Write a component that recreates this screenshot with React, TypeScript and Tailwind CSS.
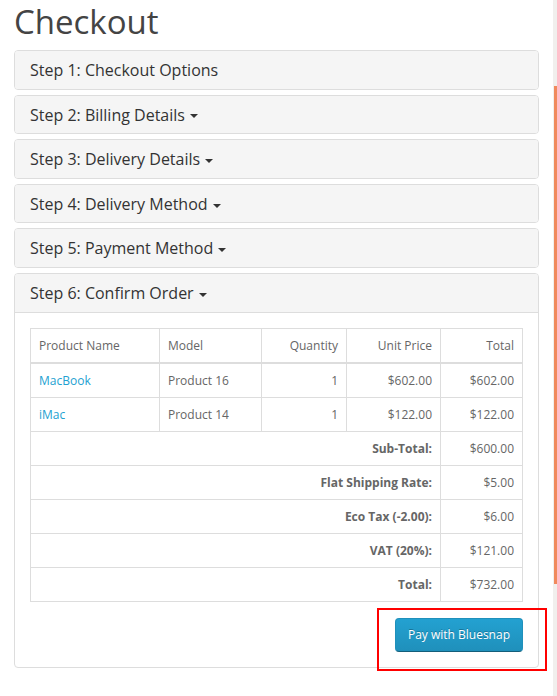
import React from "react";

const Caret = () => (
  <span className="ml-[5px] inline-block h-0 w-0 align-middle border-t-[4px] border-l-[4px] border-r-[4px] border-t-[#333] border-l-transparent border-r-transparent" />
);

const Heading = ({ label, caret = true, open = false }: { label: string; caret?: boolean; open?: boolean }) => (
  <div
    className={
      "bg-[#f5f5f5] px-[15px] pt-[11px] pb-[9px] text-[16px] leading-[17.6px] text-[#333] " +
      (open ? "border-b border-[#ddd] rounded-t-[3px]" : "rounded-[3px]")
    }
  >
    {label}
    {caret && <Caret />}
  </div>
);

const steps = [
  { label: "Step 1: Checkout Options", caret: false },
  { label: "Step 2: Billing Details", caret: true },
  { label: "Step 3: Delivery Details", caret: true },
  { label: "Step 4: Delivery Method", caret: true },
  { label: "Step 5: Payment Method", caret: true },
];

const products = [
  { name: "MacBook", model: "Product 16", qty: "1", price: "$602.00", total: "$602.00" },
  { name: "iMac", model: "Product 14", qty: "1", price: "$122.00", total: "$122.00" },
];

const totals = [
  { label: "Sub-Total:", value: "$600.00" },
  { label: "Flat Shipping Rate:", value: "$5.00" },
  { label: "Eco Tax (-2.00):", value: "$6.00" },
  { label: "VAT (20%):", value: "$121.00" },
  { label: "Total:", value: "$732.00" },
];

const td = "border border-[#ddd] px-[8px] py-[8px] leading-[17px]";

export default function App() {
  return (
    <div
      className="flex h-[696px] w-[557px] overflow-hidden bg-white text-[12px] text-[#666]"
      style={{ fontFamily: '"Open Sans", "Noto Sans", sans-serif' }}
    >
      <div className="flex-1 px-[14px]">
        <h1 className="mt-[4px] mb-[10px] text-[33px] leading-[36px] font-normal text-[#444]">Checkout</h1>
        <div className="flex flex-col gap-[5px]">
          {steps.map((s) => (
            <div key={s.label} className="rounded-[4px] border border-[#ddd] bg-white">
              <Heading label={s.label} caret={s.caret} />
            </div>
          ))}
          <div className="rounded-[4px] border border-[#ddd] bg-white">
            <Heading label="Step 6: Confirm Order" open />
            <div className="p-[15px]">
              <table className="w-full table-fixed border-collapse mb-[16px]">
                <colgroup>
                  <col className="w-[129px]" />
                  <col className="w-[102px]" />
                  <col className="w-[85px]" />
                  <col className="w-[94px]" />
                  <col />
                </colgroup>
                <thead>
                  <tr>
                    <td className={td + " text-left border-b-2"}>Product Name</td>
                    <td className={td + " text-left border-b-2"}>Model</td>
                    <td className={td + " text-right border-b-2"}>Quantity</td>
                    <td className={td + " text-right border-b-2"}>Unit Price</td>
                    <td className={td + " text-right border-b-2"}>Total</td>
                  </tr>
                </thead>
                <tbody>
                  {products.map((p) => (
                    <tr key={p.name}>
                      <td className={td + " text-left text-[#23a1d1]"}>{p.name}</td>
                      <td className={td + " text-left"}>{p.model}</td>
                      <td className={td + " text-right"}>{p.qty}</td>
                      <td className={td + " text-right"}>{p.price}</td>
                      <td className={td + " text-right"}>{p.total}</td>
                    </tr>
                  ))}
                </tbody>
                <tfoot>
                  {totals.map((t) => (
                    <tr key={t.label}>
                      <td colSpan={4} className={td + " text-right font-bold"}>
                        {t.label}
                      </td>
                      <td className={td + " text-right"}>{t.value}</td>
                    </tr>
                  ))}
                </tfoot>
              </table>
              <div className="flex justify-end">
                <div className="relative">
                  <button
                    className="rounded-[4px] border border-[#1f90bb] border-b-[#145e7a] bg-gradient-to-b from-[#23a1d1] to-[#1f90bb] px-[12px] py-[7.5px] text-[12px] leading-[17px] text-white"
                    style={{ textShadow: "0 -1px 0 rgba(0,0,0,0.25)" }}
                  >
                    Pay with Bluesnap
                  </button>
                  <div className="pointer-events-none absolute left-[-18px] top-[-10px] right-[-24px] bottom-[-19px] border-2 border-[#ff0000]" />
                </div>
              </div>
            </div>
          </div>
        </div>
      </div>
      <div className="flex w-[4px] flex-col bg-[#f1efed]">
        <div className="h-[86px]" />
        <div className="ml-[1px] h-[498px] bg-[#f08a5d]" />
      </div>
    </div>
  );
}
